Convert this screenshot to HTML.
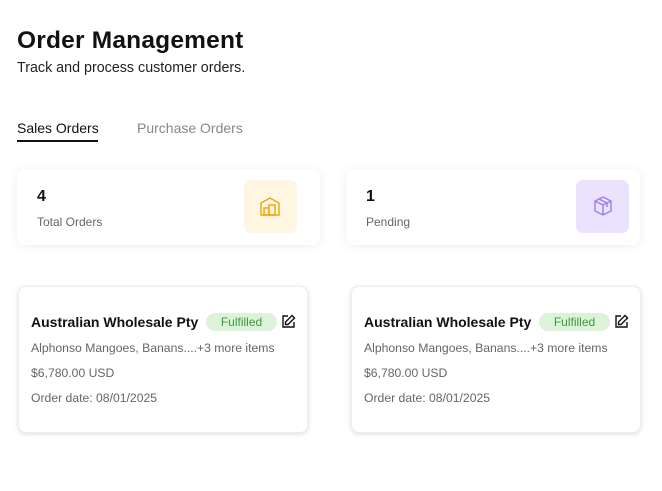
<!DOCTYPE html>
<html><head><style>
body{margin:0;width:662px;height:491px;background:#fff;font-family:"Liberation Sans",sans-serif;position:relative;overflow:hidden;color:#111}
.a{position:absolute;white-space:nowrap}
.stat{position:absolute;top:169px;height:76px;background:#fff;border-radius:8px;box-shadow:0 1px 10px rgba(0,0,0,0.07)}
.ib{position:absolute;top:11px;width:53px;height:53px;border-radius:7px}
.card{position:absolute;top:286px;width:290px;height:147px;background:#fff;border-radius:8px;box-shadow:0 1px 5px rgba(0,0,0,0.15);border:1px solid #eee;box-sizing:border-box}
.card .t{position:absolute;left:12px;top:27px;font-size:14px;font-weight:bold;color:#111}
.pill{position:absolute;left:187px;top:26px;width:71px;height:18px;border-radius:9px;background:#dcf3d9;color:#3b9a3b;font-size:12px;text-align:center;line-height:18px}
.card .g{position:absolute;left:12px;font-size:12.2px;color:#666}
</style></head><body>
<div class="a" style="left:17px;top:27px;font-size:24.5px;font-weight:bold;color:#111;letter-spacing:0.2px">Order Management</div>
<div class="a" style="left:17px;top:60px;font-size:14.3px;color:#222">Track and process customer orders.</div>
<div class="a" style="left:17px;top:120px;font-size:14px;color:#111">Sales Orders</div>
<div class="a" style="left:17px;top:140px;width:81px;height:2px;background:#111"></div>
<div class="a" style="left:137px;top:120px;font-size:14px;color:#888">Purchase Orders</div>

<div class="stat" style="left:17px;width:303px">
<div class="a" style="left:20px;top:19px;font-size:16px;font-weight:bold">4</div>
<div class="a" style="left:20px;top:46px;font-size:12px;color:#666">Total Orders</div>
<div class="ib" style="left:227px;background:#fef6e3"><svg width="53" height="53" viewBox="0 0 53 53"><g fill="none" stroke="#f5a300" stroke-width="1.4"><path d="M17 35V23l9-5 9 5v12z"/><rect x="20" y="28" width="5" height="7"/><rect x="25" y="25" width="6" height="10"/></g></svg></div>
</div>
<div class="stat" style="left:346px;width:294px">
<div class="a" style="left:20px;top:19px;font-size:16px;font-weight:bold">1</div>
<div class="a" style="left:20px;top:46px;font-size:12px;color:#666">Pending</div>
<div class="ib" style="left:230px;background:#ebe3fd"><svg width="53" height="53" viewBox="0 0 53 53"><g fill="none" stroke="#9b7cf0" stroke-width="1.4"><path d="M27 17l8 4v10l-8 4-8-4V21z"/><path d="M19 21l8 4 8-4M27 25v10M23 19l8 4v4"/></g></svg></div>
</div>

<div class="card" style="left:18px">
<div class="t">Australian Wholesale Pty</div><div class="pill">Fulfilled</div>
<svg class="a" style="left:262px;top:27px" width="15" height="15" viewBox="0 0 15 15"><g fill="none" stroke="#111" stroke-width="1.4"><path d="M7 2H2v11h11V8"/><path d="M11 1.5l2.5 2.5L7 10.5H4.5V8z"/></g></svg>
<div class="g" style="top:54px">Alphonso Mangoes, Banans....+3 more items</div>
<div class="g" style="top:79px">$6,780.00 USD</div>
<div class="g" style="top:104px">Order date: 08/01/2025</div>
</div>
<div class="card" style="left:351px">
<div class="t">Australian Wholesale Pty</div><div class="pill">Fulfilled</div>
<svg class="a" style="left:262px;top:27px" width="15" height="15" viewBox="0 0 15 15"><g fill="none" stroke="#111" stroke-width="1.4"><path d="M7 2H2v11h11V8"/><path d="M11 1.5l2.5 2.5L7 10.5H4.5V8z"/></g></svg>
<div class="g" style="top:54px">Alphonso Mangoes, Banans....+3 more items</div>
<div class="g" style="top:79px">$6,780.00 USD</div>
<div class="g" style="top:104px">Order date: 08/01/2025</div>
</div>
</body></html>
